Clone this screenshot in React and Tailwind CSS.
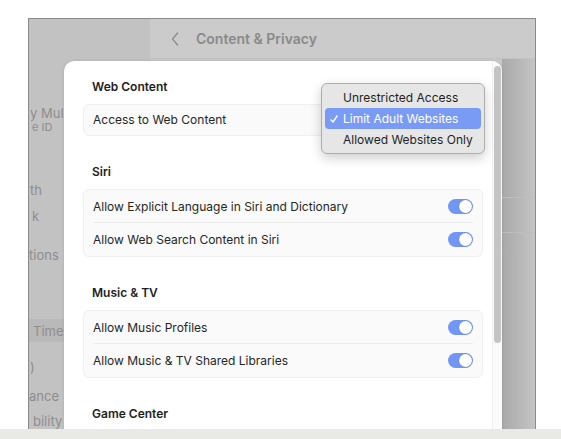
import React from "react";

const font = { fontFamily: "Inter, 'Liberation Sans', sans-serif" };

const Toggle = () => (
  <div className="w-[25px] h-[15px] rounded-full bg-[#7196f5] flex items-center justify-end pr-[1px]">
    <div className="w-[13px] h-[13px] rounded-full bg-white shadow-[0_0_1px_rgba(0,0,0,0.35)]" />
  </div>
);

const Row = ({ label, divider }) => (
  <div className="h-[33px] flex items-center justify-between px-[9px] relative">
    <span>{label}</span>
    <Toggle />
    {divider && <div className="absolute left-[9px] right-[9px] bottom-0 h-px bg-[#ececec]" />}
  </div>
);

const Heading = ({ children, mt }) => (
  <div className={`${mt} pl-[9px] h-[16px] leading-[16px] font-semibold text-[#1e1e1e]`}>{children}</div>
);

const Group = ({ children }) => (
  <div className="mt-[9px] w-[400px] rounded-[6px] bg-[#fafafa] border border-[#efefef] flex flex-col">
    {children}
  </div>
);

const side = [
  { t: "y Mull", cls: "mt-[86px] h-[16px] text-[13px] pl-[1px]" },
  { t: "e ID", cls: "h-[13px] text-[11px] leading-[13px] pl-[3px]" },
  { t: "th", cls: "mt-[48px] h-[16px] text-[13px] pl-[1px]" },
  { t: "k", cls: "mt-[10px] h-[16px] text-[13px] pl-[3px]" },
  { t: "tions", cls: "mt-[23px] h-[16px] text-[13px] pl-0" },
];

export default function App() {
  return (
    <div className="w-[561px] h-[439px] bg-white overflow-hidden flex flex-col text-[12px] text-[#262626]" style={font}>
      <div className="flex-1 pl-[28px] pt-[18px] flex">
        <div className="w-[508px] h-[411px] border-l border-t border-r border-[#8a8a8a] flex relative overflow-hidden">
          {/* sidebar */}
          <div className="w-[121px] bg-[#c2c2c2] flex flex-col text-[#8e8e8e] leading-[16px]">
            {side.map(s => (
              <div key={s.t} className={`${s.cls} text-[#8e8e8e]`}>{s.t}</div>
            ))}
            <div className="mt-[56px] h-[25px] bg-[#b9b9b9] flex items-center pl-[4px] text-[13px]">Time</div>
            <div className="mt-[17px] h-[16px] pl-[1px] text-[13px]">)</div>
            <div className="mt-[13px] h-[16px] pl-0 text-[13px]">ance</div>
            <div className="mt-[9px] h-[16px] pl-[4px] text-[13px]">bility</div>
          </div>
          {/* main */}
          <div className="flex-1 flex flex-col bg-[#c8c8c8]">
            <div className="h-[40px] flex items-center bg-[#cbcbcb] border-b border-[#c2c2c2]">
              <svg width="10" height="16" viewBox="0 0 10 16" className="ml-[21px]">
                <polyline points="7,1.5 1.5,8 7,14.5" fill="none" stroke="#8c8c8c" strokeWidth="1.3" />
              </svg>
              <span className="ml-[15px] text-[14px] font-semibold text-[#8a8a8a]">Content &amp; Privacy</span>
            </div>
            <div className="flex-1 flex justify-end">
              <div className="w-[33px] bg-gradient-to-r from-[#a9a9a9] to-[#c4c4c4] flex flex-col">
                <div className="mt-[138px] h-px bg-[#bdbdbd]" />
                <div className="mt-[34px] h-px bg-[#bdbdbd]" />
              </div>
            </div>
          </div>

          {/* sheet */}
          <div className="absolute left-[35px] top-[42px] w-[438px] h-[370px] bg-white rounded-t-[10px] shadow-[0_0_3px_rgba(0,0,0,0.12)] flex">
            <div className="w-[428px] pl-[19px] pt-[18px] flex flex-col">
              <Heading mt="mt-0">Web Content</Heading>
              <div className="mt-[9px] w-[400px] h-[32px] rounded-[6px] bg-[#fafafa] border border-[#efefef] flex items-center pl-[9px]">
                Access to Web Content
              </div>
              <Heading mt="mt-[28px]">Siri</Heading>
              <Group>
                <Row label="Allow Explicit Language in Siri and Dictionary" divider />
                <Row label="Allow Web Search Content in Siri" />
              </Group>
              <Heading mt="mt-[28px]">Music &amp; TV</Heading>
              <Group>
                <Row label="Allow Music Profiles" divider />
                <Row label="Allow Music & TV Shared Libraries" />
              </Group>
              <Heading mt="mt-[28px]">Game Center</Heading>
            </div>
            {/* scrollbar */}
            <div className="w-[10px] pt-[5px] flex flex-col items-center border-l border-[#efefef] bg-[#fbfbfb] rounded-tr-[10px]">
              <div className="w-[7px] h-[277px] rounded-full bg-[#c4c4c4]" />
            </div>

            {/* dropdown */}
            <div className="absolute left-[257px] top-[22px] w-[164px] h-[71px] rounded-[6px] bg-[#e6e6e6] border border-[#adadad] shadow-[0_4px_12px_rgba(0,0,0,0.2)] p-[3px] flex flex-col whitespace-nowrap text-[#1f1f1f]">
              <div className="h-[21px] flex items-center pl-[18px]">Unrestricted Access</div>
              <div className="h-[21px] flex items-center rounded-[4px] bg-[#7a9bf5] text-white pl-[4px]">
                <svg width="10" height="10" viewBox="0 0 10 10" className="mr-[4px]">
                  <polyline points="1.5,5.5 4,8 8.5,1.5" fill="none" stroke="white" strokeWidth="1.4" />
                </svg>
                Limit Adult Websites
              </div>
              <div className="h-[21px] flex items-center pl-[18px]">Allowed Websites Only</div>
            </div>
          </div>
        </div>
      </div>
      <div className="h-[10px] bg-[#e9e9e6]" />
    </div>
  );
}
